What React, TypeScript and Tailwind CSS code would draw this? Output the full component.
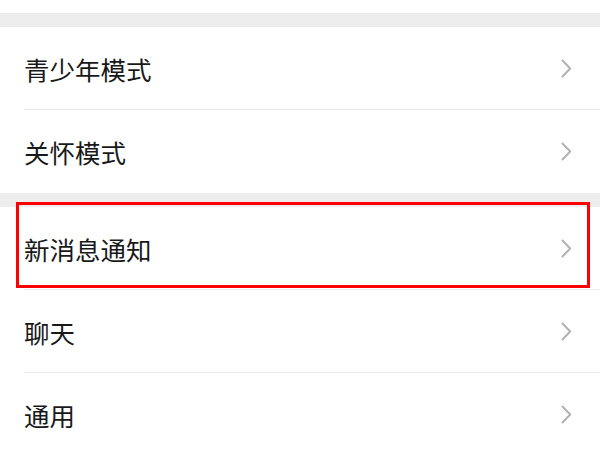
const groups: string[][] = [
  ["青少年模式", "关怀模式"],
  ["新消息通知", "聊天", "通用"],
];

function Chevron() {
  return (
    <svg width="11" height="19" viewBox="0 0 11 19" fill="none" className="shrink-0">
      <path d="M1.5 1.5 L9.2 9.5 L1.5 17.5" stroke="#b2b2b2" strokeWidth="2" strokeLinecap="round" strokeLinejoin="round" />
    </svg>
  );
}

function Row({ label, last }: { label: string; last: boolean }) {
  return (
    <div className="relative flex h-[83px] items-center justify-between pl-6 pr-[28px]">
      <span className="text-[25.5px] leading-none text-[#191919]">{label}</span>
      <Chevron />
      {!last && <div className="absolute bottom-0 left-6 right-0 h-px bg-[#ececec]" />}
    </div>
  );
}

export default function App() {
  return (
    <main
      className="relative h-[450px] w-[600px] overflow-hidden bg-white"
      style={{ fontFamily: '"Noto Sans CJK SC", "Noto Sans", sans-serif' }}
    >
      <div className="h-[13px] bg-white" />
      {groups.map((items, gi) => (
        <div key={gi}>
          <div className="h-[14px] bg-[#ededed]" />
          <div className="bg-white">
            {items.map((label, i) => (
              <Row key={label} label={label} last={i === items.length - 1} />
            ))}
          </div>
        </div>
      ))}
      {/* annotation box */}
      <div className="pointer-events-none absolute left-4 top-[202px] h-[86px] w-[574px] border-[3px] border-[#ff0000]" />
    </main>
  );
}
